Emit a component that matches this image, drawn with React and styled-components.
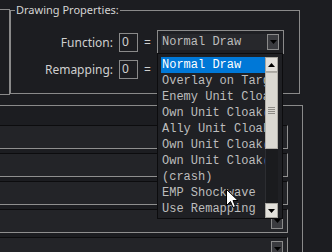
import React from 'react';
import styled, { createGlobalStyle } from 'styled-components';

const GlobalStyle = createGlobalStyle`
  html, body {
    margin: 0;
    padding: 0;
    background: #1c1d21;
  }
  body {
    font-family: "Noto Sans", "Open Sans", sans-serif;
  }
`

const Page = styled.div`
  position: relative;
  width: 332px;
  height: 252px;
  overflow: hidden;
  background: #1c1d21;
  color: #cfcfcf;
`

const TopArea = styled.div`
  display: flex;
  align-items: flex-start;
  padding-top: 9px;
`

const LeftStub = styled.div`
  box-sizing: border-box;
  width: 10px;
  height: 86px;
  border: 1px solid #8a8a8a;
  border-left: none;
`

const GroupBox = styled.div`
  position: relative;
  box-sizing: border-box;
  margin-top: 1px;
  width: 290px;
  height: 84px;
  border: 1px solid #8a8a8a;
  padding-top: 19px;
`

const Caption = styled.span`
  position: absolute;
  top: -9px;
  left: 4px;
  padding: 0 1px;
  background: #1c1d21;
  font-size: 11px;
  line-height: 16px;
  color: #d4d4d4;
`

const FormGrid = styled.div`
  display: grid;
  grid-template-columns: 108px 19px 19px 127px;
  grid-template-rows: 24px 24px;
  row-gap: 3px;
  align-items: center;
`

const Label = styled.span`
  padding-right: 6px;
  text-align: right;
  font-size: 12px;
  color: #cfcfcf;
`

const NumBox = styled.div`
  box-sizing: border-box;
  width: 19px;
  height: 19px;
  border: 1px solid #8a8a8a;
  padding-left: 2px;
  font-size: 12px;
  line-height: 16px;
  color: #d0d0d0;
`

const Equals = styled.span`
  text-align: center;
  font-size: 12px;
  color: #cfcfcf;
`

const Combo = styled.div`
  box-sizing: border-box;
  display: flex;
  align-items: center;
  height: 24px;
  border: 1px solid #8a8a8a;
  background: #1e1f23;
  padding: 3px 4px 3px 3px;
`

const ComboText = styled.div`
  flex: 1;
  height: 16px;
  background: #27282c;
  font-family: "Liberation Mono", monospace;
  font-size: 12px;
  line-height: 16px;
  color: #bdbdbd;
  padding-left: 1px;
`

const DropButton = styled.div`
  box-sizing: border-box;
  display: flex;
  align-items: center;
  justify-content: center;
  width: 12px;
  height: 16px;
  border: 1px solid #8a8a8a;
  background: #3a3b3f;
`

const LowerPanel = styled.div`
  box-sizing: border-box;
  margin-top: 10px;
  margin-left: -1px;
  width: 304px;
  height: 160px;
  border: 1px solid #8a8a8a;
  border-bottom: none;
  padding-top: 19px;
  display: flex;
  flex-direction: column;
  gap: 4px;
`

const Field = styled.div`
  box-sizing: border-box;
  display: flex;
  align-items: center;
  justify-content: flex-end;
  flex-shrink: 0;
  width: 288px;
  height: 24px;
  border-top: 1px solid #0c0c0e;
  border-bottom: 1px solid #8f8f8f;
  border-right: 1px solid #8f8f8f;
  background: #232428;
  padding-right: 4px;
`

const DropList = styled.div`
  position: absolute;
  left: 157px;
  top: 53px;
  box-sizing: border-box;
  width: 126px;
  height: 166px;
  border: 1px solid #0c0c0e;
  background: #1f2024;
  padding: 3px 4px 0 3px;
  display: flex;
`

const Items = styled.div`
  width: 104px;
  overflow: hidden;
`

const Item = styled.div`
  height: 16px;
  white-space: nowrap;
  overflow: hidden;
  padding-left: 1px;
  font-family: "Liberation Mono", monospace;
  font-size: 12px;
  line-height: 16px;
  color: ${p => (p.$selected ? '#ffffff' : '#bdbdbd')};
  background: ${p => (p.$selected ? '#0078d7' : 'transparent')};
`

const ScrollBar = styled.div`
  width: 13px;
  height: 161px;
  display: flex;
  flex-direction: column;
  background: #1a1b1e;
`

const ScrollButton = styled.div`
  box-sizing: border-box;
  display: flex;
  align-items: center;
  justify-content: center;
  height: 15px;
  border: 1px solid #a8a6a0;
  background: #e2e0db;
`

const Thumb = styled.div`
  box-sizing: border-box;
  height: 77px;
  border: 1px solid #b0aea8;
  background: #dad8d2;
  display: flex;
  flex-direction: column;
  align-items: center;
  justify-content: center;
  gap: 1px;
`

const Grip = styled.div`
  width: 7px;
  height: 1px;
  background: #8d8b86;
`

const Track = styled.div`
  flex: 1;
  border-left: 1px solid #2c2d31;
`

const Cursor = styled.svg`
  position: absolute;
  left: 226px;
  top: 189px;
`

function Triangle({ up, color }) {
  return (
    <svg width="7" height="4" viewBox="0 0 7 4">
      <path d={up ? 'M0 4 L3.5 0 L7 4 Z' : 'M0 0 L7 0 L3.5 4 Z'} fill={color} />
    </svg>
  );
}

const options = [
  'Normal Draw',
  'Overlay on Target',
  'Enemy Unit Cloak',
  'Own Unit Cloak(',
  'Ally Unit Cloak',
  'Own Unit Cloak(',
  'Own Unit Cloak(',
  '(crash)',
  'EMP Shockwave',
  'Use Remapping',
];

export default function App() {
  return (
    <Page>
      <GlobalStyle />
      <TopArea>
        <LeftStub />
        <GroupBox>
          <Caption>Drawing Properties:</Caption>
          <FormGrid>
            <Label>Function:</Label>
            <NumBox>0</NumBox>
            <Equals>=</Equals>
            <Combo>
              <ComboText>Normal Draw</ComboText>
              <DropButton><Triangle color="#000" /></DropButton>
            </Combo>
            <Label>Remapping:</Label>
            <NumBox>0</NumBox>
            <Equals>=</Equals>
            <div />
          </FormGrid>
        </GroupBox>
      </TopArea>

      <LowerPanel>
        {[0, 1, 2, 3, 4].map(i => (
          <Field key={i}>
            <DropButton><Triangle color="#000" /></DropButton>
          </Field>
        ))}
      </LowerPanel>

      <DropList>
        <Items>
          {options.map((o, i) => (
            <Item key={i} $selected={i === 0}>{o}</Item>
          ))}
        </Items>
        <ScrollBar>
          <ScrollButton><Triangle up color="#000" /></ScrollButton>
          <Thumb>
            <Grip /><Grip /><Grip /><Grip />
          </Thumb>
          <Track />
          <ScrollButton><Triangle color="#000" /></ScrollButton>
        </ScrollBar>
      </DropList>

      <Cursor width="13" height="20" viewBox="0 0 13 20">
        <path d="M0.5 0.5 L0.5 16.5 L4.5 12.5 L7 18.5 L9.5 17.5 L7 11.5 L12 11.5 Z" fill="#fff" stroke="#000" strokeWidth="1" />
      </Cursor>
    </Page>
  );
}
